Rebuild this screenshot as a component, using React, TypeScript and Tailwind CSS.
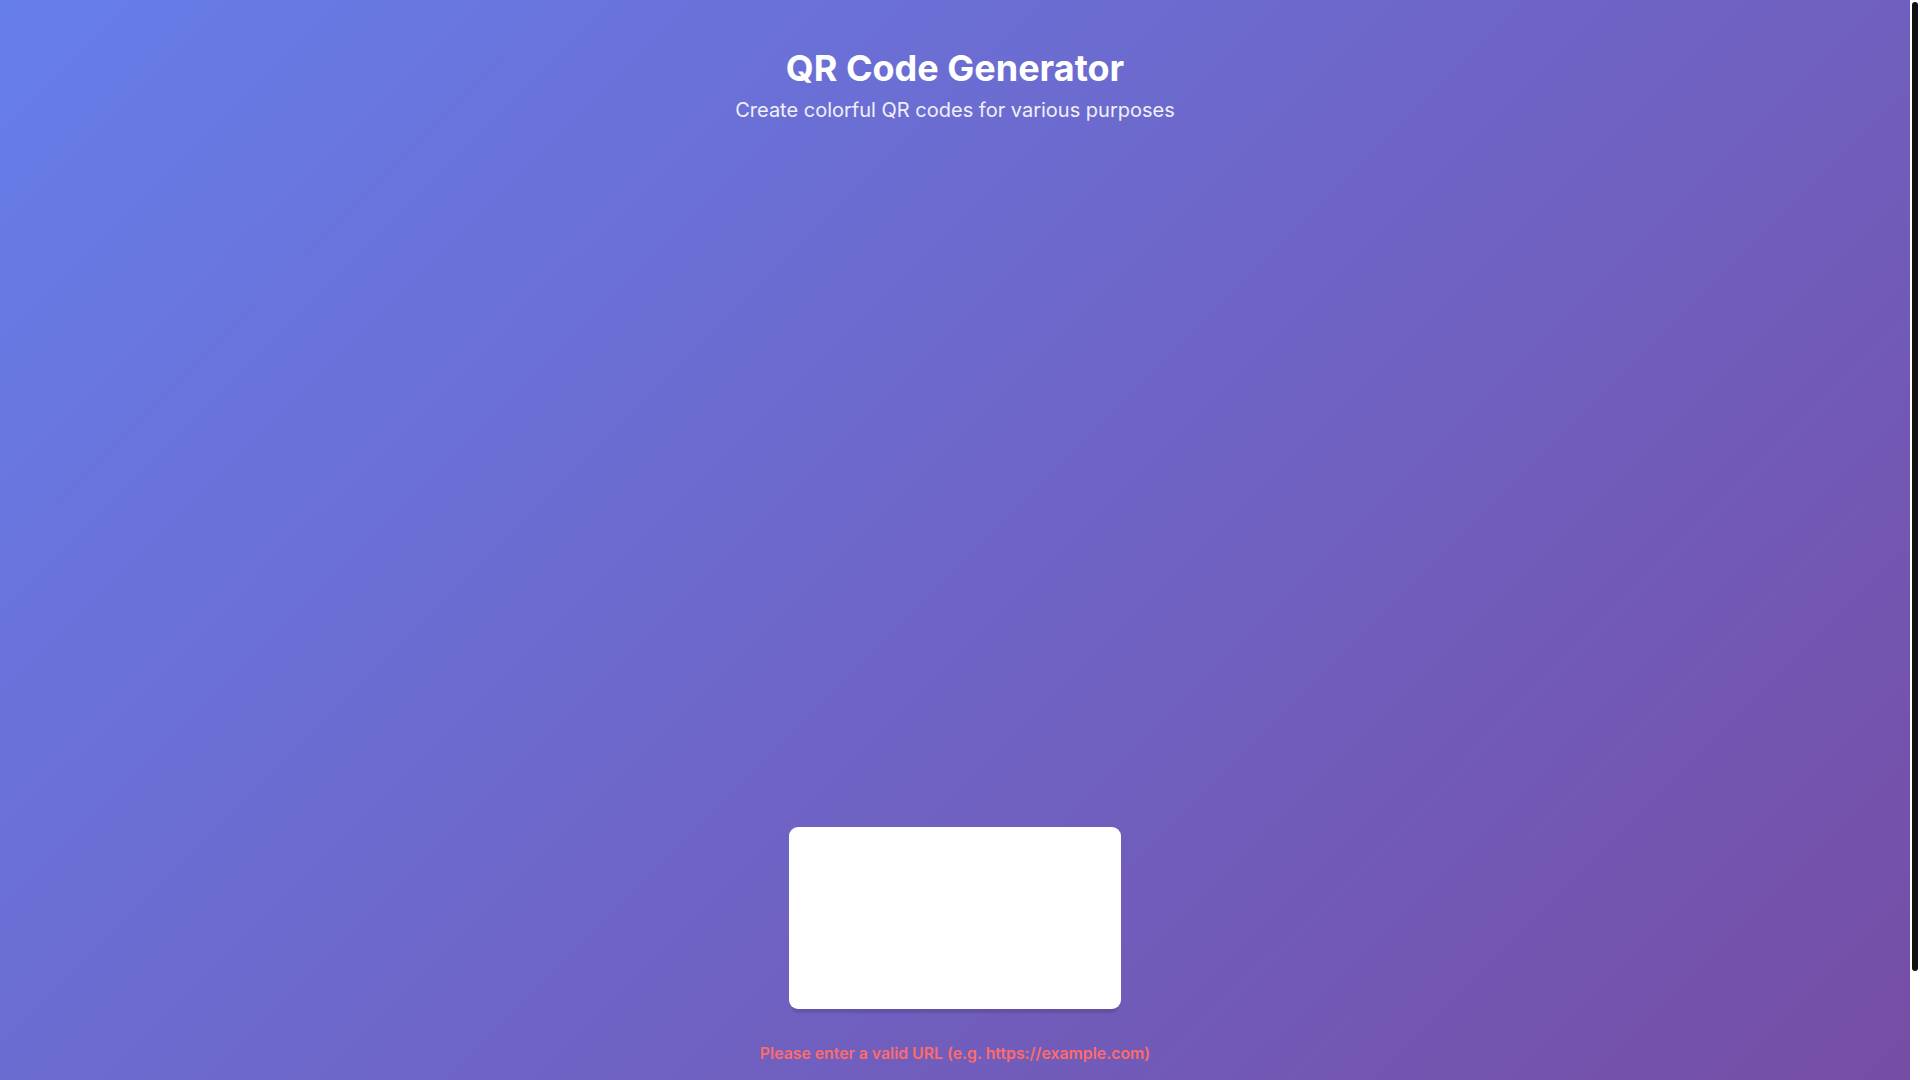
export default function App() {
  return (
    <div className="flex h-screen overflow-hidden font-['Inter','Liberation_Sans',sans-serif]">
      <div className="h-screen flex-1 overflow-hidden">
        <div className="flex min-h-[1205px] flex-col items-center bg-[linear-gradient(135deg,#667eea_0%,#764ba2_100%)] px-5 pb-[140px] pt-[47px]">
          <header className="flex flex-col items-center text-center text-white">
            <h1 className="text-[36px] font-bold leading-[43px]">QR Code Generator</h1>
            <p className="mt-[6px] text-[20px] leading-[28px] text-white/90">
              Create colorful QR codes for various purposes
            </p>
          </header>

          <main className="mt-[703px] flex flex-col items-center">
            <div className="h-[182px] w-[332px] rounded-[9px] bg-white shadow-[0_7px_2px_-3px_rgba(0,0,0,0.12)]" />
            <p className="mt-[33px] text-[15.8px] font-semibold leading-[24px] text-[#ff6b6b]">
              Please enter a valid URL (e.g. https://example.com)
            </p>
          </main>
        </div>
      </div>

      {/* scrollbar track */}
      <div className="h-screen w-[10px] shrink-0 bg-white px-[2px] pt-[2px]">
        <div className="h-[969px] w-[6px] rounded-full bg-[#111111]" />
      </div>
    </div>
  );
}
